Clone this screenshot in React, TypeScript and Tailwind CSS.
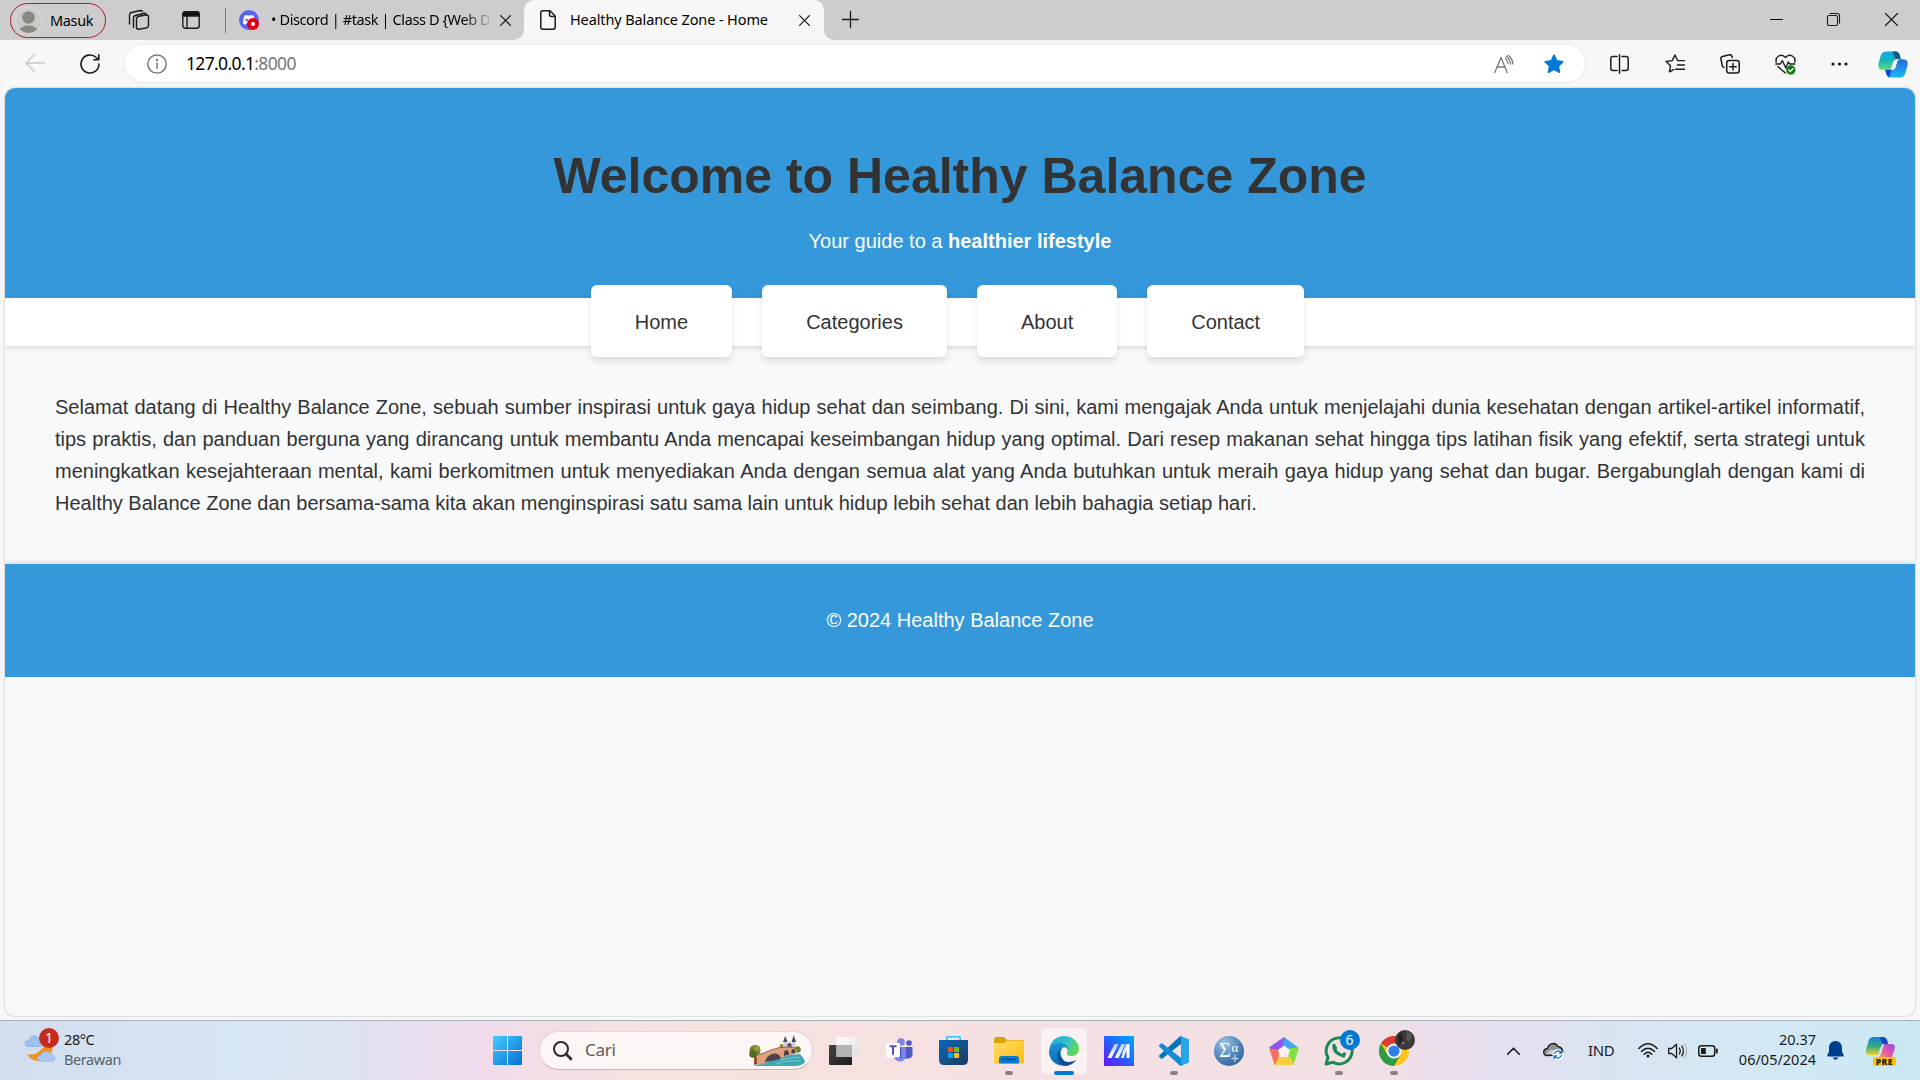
import type { ReactNode } from "react";

const ui = "font-['Noto_Sans',sans-serif]";

type IconProps = {
  w: number;
  h: number;
  box?: string;
  className?: string;
  stroke?: string;
  sw?: number;
  children: ReactNode;
};

function Icon({ w, h, box, className = "", stroke = "#1b1b1b", sw = 1.4, children }: IconProps) {
  return (
    <svg
      width={w}
      height={h}
      viewBox={box ?? `0 0 ${w} ${h}`}
      fill="none"
      stroke={stroke}
      strokeWidth={sw}
      strokeLinecap="round"
      strokeLinejoin="round"
      className={`block shrink-0 overflow-visible ${className}`}
    >
      {children}
    </svg>
  );
}

function Cross({ size, className = "" }: { size: number; className?: string }) {
  return (
    <Icon w={size} h={size} box="0 0 11 11" className={className} sw={1.3}>
      <path d="M.6.6l9.8 9.8M10.4.6L.6 10.4" />
    </Icon>
  );
}

function TabBar() {
  return (
    <div className={`flex h-10 items-center bg-[#cdcdcd] text-black ${ui}`}>
      <div className="ml-2.5 flex h-[35px] w-24 shrink-0 items-center rounded-full border-[1.5px] border-[#b01c24] pl-1">
        <div className="h-[27px] w-[27px] overflow-hidden rounded-full border border-[#dedcda] bg-[#cbc9c7]">
          <Icon w={25} h={25} stroke="none">
            <circle cx="12.5" cy="9.5" r="6.3" fill="#8b8783" />
            <path d="M2.5 25c0-10 20-10 20 0z" fill="#8b8783" />
          </Icon>
        </div>
        <span className="-mt-px ml-2 text-[14.5px] leading-5 tracking-[-0.35px]">Masuk</span>
      </div>
      <Icon w={21} h={21} className="ml-[22px]">
        <rect x="8.5" y="6" width="12" height="13" rx="2.5" transform="skewY(-10) translate(0 2.2)" />
        <path d="M5.5 17.5V8q0-2 2-2.5l9-2.3q1.300 0 1.700 1" />
        <path d="M1.500 14V5q0-2 2-2.500l9-2q1.500 0 2 1" />
      </Icon>
      <Icon w={18} h={18} className="ml-[33px]">
        <rect x=".8" y=".8" width="16.400" height="16.400" rx="2.500" />
        <path d="M1 2.500Q1 1 3 1h12q2 0 2 1.500V5H1z" fill="#111" />
        <path d="M5 5.500V17" />
      </Icon>
      <div className="ml-[25px] h-[25px] w-px bg-[#777]" />
      <Icon w={20} h={20} className="ml-[13px]" stroke="none">
        <circle cx="10" cy="10" r="10" fill="#5865f2" />
        <path d="M4 13.500c0-4 1-7.500 2-8 1.500-.8 2.500-.8 3 0h2c.5-.8 1.500-.8 3 0 1 .5 2 4 2 8-2 1.500-3 1.500-3.500 0h-5C7 15 6 15 4 13.500z" fill="#fff" />
        <circle cx="7.700" cy="10" r="1.300" fill="#5865f2" />
        <circle cx="14" cy="14" r="6" fill="#e1000f" />
        <circle cx="14" cy="14" r="2" fill="#fff" />
      </Icon>
      <div className="-mt-0.5 ml-3 w-[218px] shrink-0 whitespace-nowrap [mask-image:linear-gradient(to_right,black_88%,rgba(0,0,0,0.15))]">
        <span className="text-[14.5px] leading-5 tracking-[-0.39px]">• Discord | #task | Class D {"{Web D"}</span>
      </div>
      <Cross size={11} className="ml-[11px]" />
      <div className="ml-[3px] h-10 w-2.5 shrink-0 overflow-hidden bg-[#f7f7f7]">
        <div className="h-10 w-2.5 rounded-br-[10px] bg-[#cdcdcd]" />
      </div>
      <div className="flex h-10 w-[300px] shrink-0 items-center rounded-t-[10px] bg-[#f7f7f7]">
        <Icon w={16} h={20} className="ml-4" sw={1.500}>
          <path d="M3 .8h7l5.200 5.200v11q0 2.200-2.200 2.200H3Q.8 19.200.8 17V3Q.8.8 3 .8zM9.500 1v3.500q0 2 2 2h3.500" />
        </Icon>
        <span className="-mt-0.5 ml-3.5 w-[229px] whitespace-nowrap text-[14.5px] leading-5 tracking-[-0.12px]">
          Healthy Balance Zone - Home
        </span>
        <Cross size={11} />
      </div>
      <div className="h-10 w-2.5 shrink-0 overflow-hidden bg-[#f7f7f7]">
        <div className="h-10 w-2.5 rounded-bl-[10px] bg-[#cdcdcd]" />
      </div>
      <Icon w={17} h={17} className="-mt-0.5 ml-2" sw={1.300}>
        <path d="M8.500.5v16M.5 8.500h16" />
      </Icon>
      <div className="-mt-px ml-auto flex items-center pr-[22px]">
        <div className="h-px w-[13px] bg-black" />
        <Icon w={13} h={13} className="ml-11" sw={1.100}>
          <rect x=".5" y="2.500" width="10" height="10" rx="1.500" />
          <path d="M3 .5h7.500q2 0 2 2V10" />
        </Icon>
        <Icon w={13} h={13} className="ml-[45px]" sw={1.200}>
          <path d="M.5.5l12 12M12.500.5l-12 12" />
        </Icon>
      </div>
    </div>
  );
}

function Toolbar() {
  return (
    <div className={`flex h-12 items-center bg-[#f7f7f7] ${ui}`}>
      <Icon w={20} h={18} className="-mt-0.5 ml-[25px]" stroke="#c9c9c9">
        <path d="M19.500 9H1M9.500.5L1 9l8.500 8.500" />
      </Icon>
      <Icon w={20} h={20} className="ml-[35px]" sw={1.600}>
        <path d="M19 10a9 9 0 1 1-2.800-6.500L18.500 5.500M18.800.8v5h-5" />
      </Icon>
      <div className="-mt-px ml-[25px] flex h-[37px] w-[1460px] shrink-0 items-center rounded-full bg-white shadow-[0_0_4px_rgba(0,0,0,0.09)]">
        <Icon w={20} h={20} className="ml-[22px]" stroke="#6b6b6b" sw={1.300}>
          <circle cx="10" cy="10" r="9.200" />
          <path d="M10 9v5.500" />
          <circle cx="10" cy="6" r=".5" fill="#6b6b6b" />
        </Icon>
        <span className="-mt-px ml-[19px] text-[17.5px] leading-6 tracking-[-0.65px] text-black">
          127.0.0.1<span className="text-[#767676]">:8000</span>
        </span>
        <Icon w={20} h={18} className="ml-auto" stroke="#757575" sw={1.300}>
          <path d="M.8 17.500L7 2.500l6.200 15M3 12h8M11.500 3.500q2.500 2 2.500 5M12 1.200q4 2.300 4.500 7.800M14 .3q4.500 3 5 8.700" />
        </Icon>
        <Icon w={20} h={20} className="ml-[30px] mr-[21px]" stroke="#0078d4" sw={1.500}>
          <path d="M10 1.200l2.700 5.600 6.200.9-4.500 4.400 1.100 6.200L10 15.400l-5.500 2.900 1.100-6.200L1.100 7.700l6.200-.9z" fill="#0078d4" />
        </Icon>
      </div>
      <Icon w={19} h={20} className="ml-[25px]" sw={1.500}>
        <path d="M9.500.8v18.400M7 2.500H3Q.8 2.500.8 4.700v9.600q0 2.200 2.200 2.200h4M12 2.500h4q2.200 0 2.200 2.200v9.600q0 2.200-2.200 2.200h-4" />
      </Icon>
      <Icon w={20} h={20} className="ml-9">
        <path d="M12.500 6.500L10 1 7.200 6.600l-6.100.9 4.400 4.300-1.100 6.100 4.300-2.200M12.500 6.500l.5.100h6.500M12.500 11h7M10.500 15.200h9" />
      </Icon>
      <Icon w={20} h={20} className="ml-[35px]" sw={1.500}>
        <rect x="6.700" y="6.500" width="12.500" height="12.500" rx="2.500" />
        <path d="M13 9.500v6.500M9.700 12.700h6.500M4 13.500l-1.500-1L.9 5Q.6 3 2.500 2.500L9.500.8q2-.4 2.500 1.500l.3 1.200" />
      </Icon>
      <Icon w={21} h={20} className="ml-[35px]" sw={1.400}>
        <path d="M1.300 8C-.2 3 6.200-1.500 10.500 3.500 14.800-1.500 21.200 3 19.700 8M2.800 12.500l7.500 6.500M.8 10h4.500l2-3.500 3.500 7.500 2.500-6 1.500 2h5" />
        <circle cx="15.800" cy="16" r="4.700" fill="#107c10" stroke="none" />
        <path d="M13.800 16l1.500 1.500 2.700-2.800" stroke="#fff" />
      </Icon>
      <Icon w={17} h={4} className="ml-[35px]" stroke="none">
        <g fill="#111">
          <circle cx="2" cy="2" r="1.600" />
          <circle cx="8.500" cy="2" r="1.600" />
          <circle cx="15" cy="2" r="1.600" />
        </g>
      </Icon>
      <Icon w={30} h={27} className="ml-[30px]" stroke="none" box="0 0 31 27">
        <defs>
          <linearGradient id="cpA" x1="0" y1="0" x2="0" y2="1">
            <stop offset="0" stopColor="#0fa6e3" />
            <stop offset=".5" stopColor="#17b5b5" />
            <stop offset="1" stopColor="#62dc83" />
          </linearGradient>
          <linearGradient id="cpB" x1="0" y1="0" x2="0" y2="1">
            <stop offset="0" stopColor="#2b68da" />
            <stop offset="1" stopColor="#13bcfa" />
          </linearGradient>
        </defs>
        <path d="M9 0h9q3.500 0 4.500 4l1 4h-4q-3 0-4 3.500L13 19H5Q-1 19 .5 12.500L3 4Q4.300 0 9 0z" fill="url(#cpA)" />
        <path d="M15 0h3q3.500 0 4.500 4l1 4h-3.500q-2 0-3-2.500z" fill="#135a84" />
        <path d="M22 27h-9q-3.500 0-4.500-4l-1-4h4q3 0 4-3.500L18 8h7.500q6.500 0 5 6.500L28 23q-1.300 4-6 4z" fill="url(#cpB)" />
        <path d="M7.500 19h4q1.500 0 2.500-1l-2 8.800q-2.500-.5-3.500-3.800z" fill="#1b44cf" />
        <path d="M19.500 8h2.700q-1.700.6-2.400 3l-1.700 5.500q-.8 2.500-3 2.500h-3.300q2.500-.5 3.300-3.300l1.600-5Q17.600 8 19.500 8z" fill="#fff" />
      </Icon>
    </div>
  );
}

const lines = [
  "Selamat datang di Healthy Balance Zone, sebuah sumber inspirasi untuk gaya hidup sehat dan seimbang. Di sini, kami mengajak Anda untuk menjelajahi dunia kesehatan dengan artikel-artikel informatif,",
  "tips praktis, dan panduan berguna yang dirancang untuk membantu Anda mencapai keseimbangan hidup yang optimal. Dari resep makanan sehat hingga tips latihan fisik yang efektif, serta strategi untuk",
  "meningkatkan kesejahteraan mental, kami berkomitmen untuk menyediakan Anda dengan semua alat yang Anda butuhkan untuk meraih gaya hidup yang sehat dan bugar. Bergabunglah dengan kami di",
  "Healthy Balance Zone dan bersama-sama kita akan menginspirasi satu sama lain untuk hidup lebih sehat dan lebih bahagia setiap hari.",
];

function WebPage() {
  return (
    <div className="bg-[#f7f7f7] px-[5px] pb-1">
      <div className="h-[928px] overflow-hidden rounded-[10px] bg-[#f8f9fb] font-['Liberation_Sans',Arial,sans-serif] text-xl leading-8 text-[#333] shadow-[0_0_2px_rgba(0,0,0,0.35)]">
        <header className="h-[210px] bg-[#3498db] pt-12 text-center">
          <h1 className="text-[50px] font-bold leading-[80px]">Welcome to Healthy Balance Zone</h1>
          <p className="mt-[9px] text-white">
            Your guide to a <strong>healthier lifestyle</strong>
          </p>
        </header>
        <nav className="flex h-12 items-center bg-white pl-[586px] shadow-[0_2px_5px_rgba(0,0,0,0.13)]">
          <ul className="-mt-0.5 flex gap-[30.56px]">
            {["Home", "Categories", "About", "Contact"].map((label) => (
              <li key={label} className="rounded-md bg-white px-[43.75px] pb-[19px] pt-[21px] shadow-[0_5px_6px_rgba(0,0,0,0.1)]">
                {label}
              </li>
            ))}
          </ul>
        </nav>
        <main className="h-[218px] px-[50px] pt-[45px]">
          {lines.map((line, i) => (
            <p key={line} className={i < 3 ? "whitespace-nowrap [text-align-last:justify]" : "whitespace-nowrap"}>
              {line}
            </p>
          ))}
        </main>
        <footer className="h-[113px] bg-[#3498db] pt-10 text-center text-white shadow-[0_-2px_5px_rgba(0,0,0,0.13)]">
          © 2024 Healthy Balance Zone
        </footer>
      </div>
    </div>
  );
}

function AppCell({ children, dot }: { children: ReactNode; dot?: boolean }) {
  return (
    <div className="relative flex h-[60px] w-[55px] shrink-0 items-center justify-center">
      {children}
      {dot && <div className="absolute bottom-[6px] left-1/2 h-1 w-2 -translate-x-1/2 rounded-full bg-[#8b8281]" />}
    </div>
  );
}

function Apps() {
  return (
    <div className="ml-[3px] flex">
      <AppCell>
        <Icon w={30} h={28} stroke="none">
          <defs>
            <linearGradient id="tvA" x1="0" y1="0" x2="1" y2="1">
              <stop stopColor="#444" />
              <stop offset="1" stopColor="#1b1b1b" />
            </linearGradient>
            <linearGradient id="tvB" x1="0" y1="0" x2="1" y2="1">
              <stop stopColor="#fff" />
              <stop offset="1" stopColor="#dedede" />
            </linearGradient>
          </defs>
          <rect y="8" width="23" height="20" rx="1" fill="url(#tvA)" />
          <rect x="7.500" width="22.500" height="20" rx="1" fill="url(#tvB)" />
          <rect x="7.500" y="8" width="15.500" height="12" fill="#b3b3b3" />
        </Icon>
      </AppCell>
      <AppCell>
        <Icon w={27} h={24} stroke="none" className="-mt-0.5 ml-0.5">
          <circle cx="15" cy="4" r="3.800" fill="#7b83eb" />
          <circle cx="23" cy="5" r="2.800" fill="#5059c9" />
          <path d="M17 9h9.500v7q0 4-4 4.500H17z" fill="#5059c9" />
          <path d="M8 9h12v8q0 6-6 6.500-6-.5-6-6z" fill="#7b83eb" />
          <path d="M14 9h1v11H8l1-1h5z" fill="#4048a5" />
          <rect y="5" width="14" height="14.500" rx="1" fill="#fff" />
          <path d="M3.500 8.200h7M7 8.200v8.500" stroke="#4b53bc" strokeWidth="2" strokeLinecap="butt" />
        </Icon>
      </AppCell>
      <AppCell>
        <Icon w={29} h={29} stroke="none">
          <defs>
            <linearGradient id="msS" x1="0" y1="0" x2="1" y2="1">
              <stop stopColor="#0669ba" />
              <stop offset="1" stopColor="#243a5f" />
            </linearGradient>
          </defs>
          <path d="M7.800 5V1.500Q7.800.8 8.500.8h12q.7 0 .7.700V5" fill="none" stroke="#2fc0f5" strokeWidth="1.600" />
          <path d="M0 4h29v20q0 5-5 5H5q-5 0-5-5z" fill="url(#msS)" />
          <path d="M9 11h5v5H9z" fill="#f25022" />
          <path d="M15 11h5v5h-5z" fill="#7fba00" />
          <path d="M9 17h5v5H9z" fill="#00a4ef" />
          <path d="M15 17h5v5h-5z" fill="#ffb900" />
        </Icon>
      </AppCell>
      <AppCell dot>
        <Icon w={30} h={27} stroke="none">
          <defs>
            <linearGradient id="fx" x1="0" y1="0" x2="1" y2="1">
              <stop stopColor="#ffdf6b" />
              <stop offset="1" stopColor="#fcb90f" />
            </linearGradient>
          </defs>
          <path d="M0 2q0-2 2-2h8l3 3h15q2 0 2 2v3H0z" fill="#dca106" />
          <path d="M0 6h10l3-2.500h15q2 0 2 2V25q0 1.500-1.500 1.500h-27Q0 26.500 0 25z" fill="url(#fx)" />
          <path d="M5 26.500V22q0-3 3-3h14q3 0 3 3v4.500z" fill="#0d7bcc" />
          <path d="M8.500 22.500h13" stroke="#0b4f8c" strokeWidth="1.300" />
        </Icon>
      </AppCell>
      <AppCell>
        <div className="flex h-12 w-12 items-center justify-center rounded-md border border-[#eee0e0] bg-[#faf2f2]">
          <Icon w={30} h={30} stroke="none">
            <defs>
              <linearGradient id="edA" x1="0" y1=".2" x2="1" y2=".6">
                <stop stopColor="#1ca7e0" />
                <stop offset=".55" stopColor="#35c1c5" />
                <stop offset="1" stopColor="#66dc4b" />
              </linearGradient>
              <linearGradient id="edB" x1="0" y1="0" x2="0" y2="1">
                <stop stopColor="#1a93cf" />
                <stop offset="1" stopColor="#1067b8" />
              </linearGradient>
            </defs>
            <path d="M.3 13C1.500 5 8 0 15 0c9 0 15 6.500 15 12.500 0 5-3.800 7.500-7.500 7.500-4 0-5-1.500-4.300-2.800C19.500 14 17 8 10.500 8 5 8 1.500 10 .3 13z" fill="url(#edA)" />
            <path d="M0 15C.5 10 5 6.800 10.500 6.800c4.800 0 8.300 3 8.500 6.500-1.200-1.500-3-2.500-4.500-2-4 2-5 11.700 6 17C12 33-.5 26.500 0 15z" fill="url(#edB)" />
            <path d="M13.500 12c-6 5-1.500 14 6 14 3.500 0 6-1 8-2.500C24 29 18 30.500 14 29.500 7 26 6.500 15 13.500 12z" fill="#114e94" />
          </Icon>
        </div>
        <div className="absolute bottom-[6px] left-1/2 h-1 w-5 -translate-x-1/2 rounded-full bg-[#0078d4]" />
      </AppCell>
      <AppCell>
        <Icon w={30} h={30} stroke="none">
          <defs>
            <linearGradient id="asus" x1="1" y1="0" x2="0" y2="1">
              <stop stopColor="#00aaff" />
              <stop offset=".5" stopColor="#2461ff" />
              <stop offset="1" stopColor="#6812ff" />
            </linearGradient>
            <linearGradient id="asusW" x1="0" y1="1" x2="1" y2="0">
              <stop stopColor="#fff" />
              <stop offset=".5" stopColor="#e4ecff" />
              <stop offset="1" stopColor="#9dbcff" />
            </linearGradient>
          </defs>
          <path d="M0 0h30v30H0z" fill="url(#asus)" />
          <path d="M3.500 22L10.500 8h4.200L7.500 22z" fill="url(#asusW)" />
          <path d="M10.500 22l7-14h4.200l-7.200 14z" fill="url(#asusW)" />
          <path d="M17 22l6-14h2.500v14h-3v-8l-3 8z" fill="#fff" />
          <path d="M22.500 8H24l-5 10.500-1-1.300z" fill="#dbe6ff" />
        </Icon>
      </AppCell>
      <AppCell dot>
        <Icon w={30} h={30} stroke="none">
          <path d="M22 0v8L3.500 22.500q-.8.500-1.500 0L.4 21q-.8-1 0-1.800L20.500.8Q21.200.1 22 0z" fill="#0874bd" />
          <path d="M22 30v-8L3.500 7.500Q2.700 7 2 7.500L.4 9q-.8 1 0 1.800l20.100 18.400q.7.700 1.500.8z" fill="#128dd5" />
          <path d="M22 0l8 3.500v23L22 30z" fill="#2aa5e8" />
        </Icon>
      </AppCell>
      <AppCell>
        <Icon w={30} h={30} stroke="none">
          <defs>
            <radialGradient id="sig" cx=".35" cy=".25" r=".8">
              <stop stopColor="#9fc4e2" />
              <stop offset=".6" stopColor="#5187bb" />
              <stop offset="1" stopColor="#32659f" />
            </radialGradient>
          </defs>
          <circle cx="15" cy="15" r="15" fill="url(#sig)" />
          <text x="5" y="20.500" fontSize="20" fill="#fff" fontFamily="Liberation Serif">Σ</text>
          <text x="17.500" y="16" fontSize="13" fill="#fff" fontFamily="Liberation Serif">α</text>
          <path d="M21 19.500v6M18 22.500h6" stroke="#b9d2e8" strokeWidth="1.300" />
        </Icon>
      </AppCell>
      <AppCell>
        <Icon w={30} h={28} stroke="none">
          <path d="M15 0L0 10.500l2 1.800 8 1L19.500 7z" fill="#8d58ee" />
          <path d="M15 0l13.500 10-1 3-6 .5-7-4z" fill="#43a5f5" />
          <path d="M30 10.500L24.500 28 19 20l2-9z" fill="#80e03c" />
          <path d="M25 28H6l-1-4 7-6 9 2z" fill="#f5cf3d" />
          <path d="M0 11.500L5.800 28 9 22l2-9z" fill="#f9705e" />
          <path d="M15 8.500l6 4.500-2.200 7h-7.500L9 13z" fill="#fbf0f0" />
        </Icon>
      </AppCell>
      <AppCell dot>
        <div className="relative">
          <Icon w={30} h={30} stroke="#1a8a55" sw={3}>
            <path d="M2 28l2-6.500A13 13 0 1 1 9 26.300z" />
            <path d="M10 9.500q-1 7 9.500 10.500M10 9.500l1.500 2.500M19.500 20l.8-2" strokeWidth="3.300" />
          </Icon>
          <span className={`absolute -right-[6px] -top-[6px] flex h-5 w-5 items-center justify-center rounded-full bg-[#0078d4] text-[14px] leading-none text-white ${ui}`}>
            6
          </span>
        </div>
      </AppCell>
      <AppCell dot>
        <div className="relative">
          <Icon w={30} h={30} box="0 0 48 48" stroke="none">
            <circle cx="24" cy="24" r="24" fill="#ffc420" />
            <path d="M24 24L3.200 12A24 24 0 0 1 44.800 12z" fill="#dc3b30" />
            <path d="M24 12h20.800L24 24z" fill="#dc3b30" />
            <path d="M3.200 12A24 24 0 0 0 24 48l10.400-18-10.400-6L13.600 30z" fill="#2c9a48" />
            <circle cx="24" cy="24" r="12" fill="#fff" />
            <circle cx="24" cy="24" r="9" fill="#327ee8" />
          </Icon>
          <Icon w={20} h={20} className="absolute -right-[6px] -top-[6px]" stroke="none">
            <circle cx="10" cy="10" r="10" fill="#3a3a3a" />
            <path d="M12 1l5 4-2 7-4-2z" fill="#555" />
            <path d="M3 5l4-2 1 8-4 4z" fill="#222" />
            <circle cx="8" cy="13" r="1.300" fill="#777" />
          </Icon>
        </div>
      </AppCell>
    </div>
  );
}

function Bridge() {
  return (
    <Icon w={56} h={31} className="ml-auto mr-[7px]" stroke="none">
      <path d="M5 30q10-1 18-5l16-5 12-1q6 7 5 8.500-3 3-8 3.500H8z" fill="#3ea7b5" />
      <path d="M27 29q10-4 24-3M32 25q10-2.500 18-3" stroke="#8bd3d9" strokeWidth=".8" />
      <path d="M34.500 12V6.500h3.500V9h5V6.500h3.500V12z" fill="#cfcbdb" />
      <path d="M34 7L36.200 1l2.300 6zM42.500 7L44.800 0 47 7z" fill="#454a68" />
      <path d="M38.500 12V9q2-2.500 4 0v3z" fill="#5d545f" />
      <circle cx="32.500" cy="11" r="2" fill="#9c8f28" />
      <circle cx="48.500" cy="14.500" r="3.300" fill="#71852a" />
      <path d="M7 29V20.500q8-2 15-5 8-3 17-3.500 6 0 8 1.500V19l-5 .7-7 2.300-4 2q-6-4-10-1-3 2-4.500 5l-4 1.500z" fill="#dfa077" />
      <path d="M10 19.500q5-1 12-4.500 8-3 16-3 6 0 9 1.500" stroke="#8a5b48" strokeWidth="1" />
      <path d="M15.500 27q3-8 10-8.500 5 0 6.500 5l-9 2.500zM35 21q-.5-6 2.300-6T40 19.500zM42.500 18.500q-.5-4.500 1.700-4.500t2 4z" fill="#4a4251" />
      <circle cx="6" cy="15.500" r="5.500" fill="#72842b" />
      <circle cx="4" cy="19" r="3.800" fill="#536d22" />
      <circle cx="8" cy="13.500" r="3" fill="#95982f" />
      <path d="M5.300 20h2l.7 9-3 1z" fill="#844420" />
    </Icon>
  );
}

function Tray() {
  return (
    <div className="ml-auto flex items-center pr-[25px]">
      <Icon w={13} h={8} sw={1.600}>
        <path d="M.7 7.200l5.800-6 5.800 6" />
      </Icon>
      <Icon w={21} h={18} className="ml-[23px]" sw={1.400}>
        <path d="M4.500 13.500C-.5 13.500-.5 7 4.500 6.500 6 1 12-.5 15 4.500c4 .5 5.500 4 4.500 7-3 2-9 2-15 2z" fill="#929292" />
        <path d="M3 12q4-5 8-4l4 4z" fill="#c8c8c8" stroke="none" />
        <circle cx="15" cy="12.500" r="5.500" fill="#fff" stroke="none" />
        <path d="M11.500 11.500q3.500-5 7-.5M18.800 8.500v2.700h-2.500M18.500 13.500q-3.500 5-7 .5M11.200 16.500v-2.700h2.500" stroke="#0c6fc5" strokeWidth="1.300" />
      </Icon>
      <span className="-mt-0.5 ml-6 w-[50px] text-[15px] leading-5 tracking-[-0.4px]">IND</span>
      <Icon w={20} h={15} sw={1.500}>
        <path d="M.8 5.500q9.200-9.500 18.400 0M3.500 8.500q6.500-6.500 13 0M6.200 11.300q3.800-4 7.600 0" />
        <circle cx="10" cy="13" r="1.500" fill="#1b1b1b" stroke="none" />
      </Icon>
      <Icon w={20} h={16} className="ml-2.5" sw={1.300}>
        <path d="M.7 5.500h3L8.500 1.200v13.600L3.700 10.500h-3zM11.300 5q2 3 0 6M13.800 3q3.200 5 0 10" />
        <path d="M16.500 1q4.500 7 0 14" stroke="#b1b7be" />
      </Icon>
      <Icon w={20} h={12} className="ml-2.5" sw={1.500}>
        <rect x=".8" y=".8" width="15.900" height="10.400" rx="2.500" />
        <rect x="3" y="3" width="4.800" height="6" rx=".5" fill="#1b1b1b" stroke="none" />
        <path d="M18.800 4.500v3" strokeWidth="2" />
      </Icon>
      <div className="-mt-1 ml-[19px] w-[79px] whitespace-nowrap text-right text-[14.5px] leading-5">
        <div>20.37</div>
        <div>06/05/2024</div>
      </div>
      <Icon w={17} h={19} className="ml-[11px]" stroke="none">
        <path d="M8.500 0C4.500 0 2 3 2 6.500v4L.3 14q-.5 1.500 1 1.500h14.400q1.500 0 1-1.500L15 10.500v-4C15 3 12.500 0 8.500 0zM5.500 16.500h6q-3 4.500-6 0z" fill="#003e92" />
      </Icon>
      <div className="relative ml-[22px] mt-0.5">
        <Icon w={29} h={29} stroke="none">
          <defs>
            <linearGradient id="preA" x1="0" y1="0" x2="0" y2="1">
              <stop stopColor="#1681d8" />
              <stop offset=".5" stopColor="#35a77d" />
              <stop offset="1" stopColor="#e9d22d" />
            </linearGradient>
            <linearGradient id="preB" x1="1" y1="0" x2="0" y2="1">
              <stop stopColor="#8f4ae9" />
              <stop offset=".6" stopColor="#ed5b9c" />
              <stop offset="1" stopColor="#ff9b58" />
            </linearGradient>
          </defs>
          <path d="M8 0h9q4 0 5 7h-4q-2.500 0-3.500 4L12 18H4q-5 0-4-5L2.500 4Q3.500 0 8 0z" fill="url(#preA)" />
          <path d="M14 0h3q4 0 5 7h-4q-2 0-3-3z" fill="#1643c7" />
          <path d="M18 7h7q5 0 3.500 5L26 20H12q2 0 3-3z" fill="url(#preB)" />
        </Icon>
        <span className="absolute -right-px bottom-0 h-[9px] rounded-[2px] bg-[#ffc400] px-[3px] font-['Noto_Sans',sans-serif] text-[8.5px] font-black leading-[9px] tracking-[0.5px] text-[#222]">
          PRE
        </span>
      </div>
    </div>
  );
}

function Taskbar() {
  return (
    <div
      className={`flex h-[60px] items-center border-t border-[#aab0b8] bg-[linear-gradient(90deg,#d2deef_0%,#d7e6f3_13%,#dfe1f0_19%,#f1dbed_25%,#f5e1e1_32%,#f6e2dc_40%,#f5e1e2_50%,#f3e0e3_70%,#e9deee_76%,#d9e4f1_84%,#d3e8f5_92%,#c9e8f3_100%)] text-[#1b1b1b] ${ui}`}
    >
      <div className="relative -mt-[5px] ml-[25px]">
        <Icon w={31} h={30} stroke="none">
          <path d="M2 21q11 3 18-10h7c2 8-3 18-14 17q-8-1-11-7z" fill="#f1921e" />
          <path d="M3 13.500C-1 13-1 8 3.500 7.500 5 1.500 13 1 14 7c5 0 5 6.500 1 6.500z" fill="#9fc0f0" stroke="#85aae2" strokeWidth=".7" />
          <path d="M15 28c-4-1-3-5.500 1-6 2-5 9-5 10 0 5 0 5 6 1 6z" fill="#a9c9f4" stroke="#85aae2" strokeWidth=".7" />
        </Icon>
        <span className="absolute -top-[5px] left-3.5 flex h-5 w-5 items-center justify-center rounded-full bg-[#c42b1c] text-[14px] leading-none text-white">
          1
        </span>
      </div>
      <div className="-mt-1 ml-2 w-[429px] text-[14.5px] leading-5 tracking-[-0.4px]">
        <div>28°C</div>
        <div className="text-[#566069]">Berawan</div>
      </div>
      <Icon w={29} h={29} stroke="none">
        <defs>
          <linearGradient id="win" x1="0" y1="0" x2="29" y2="29" gradientUnits="userSpaceOnUse">
            <stop stopColor="#48cdfd" />
            <stop offset="1" stopColor="#0070d1" />
          </linearGradient>
        </defs>
        <path d="M0 1q0-1 1-1h13v14H0zM15 0h13q1 0 1 1v13H15zM0 15h14v14H1q-1 0-1-1zM15 15h14v13q0 1-1 1H15z" fill="url(#win)" />
      </Icon>
      <div className="-mt-px ml-[17px] flex h-[39px] w-[274px] shrink-0 items-center rounded-full border border-[#e3d2d2] border-b-[#c5b3b3] bg-[#fcf6f5]">
        <Icon w={19} h={19} className="ml-[13px]" stroke="#2b2b2b" sw={2}>
          <circle cx="8" cy="8" r="7" />
          <path d="M13 13l5 5" strokeWidth="2.600" />
        </Icon>
        <span className="ml-[13px] text-[17px] leading-6 tracking-[-0.3px] text-[#5d5a5a]">Cari</span>
        <Bridge />
      </div>
      <Apps />
      <Tray />
    </div>
  );
}

export default function App() {
  return (
    <div className="flex h-[1080px] w-[1920px] flex-col overflow-hidden">
      <TabBar />
      <Toolbar />
      <WebPage />
      <Taskbar />
    </div>
  );
}
